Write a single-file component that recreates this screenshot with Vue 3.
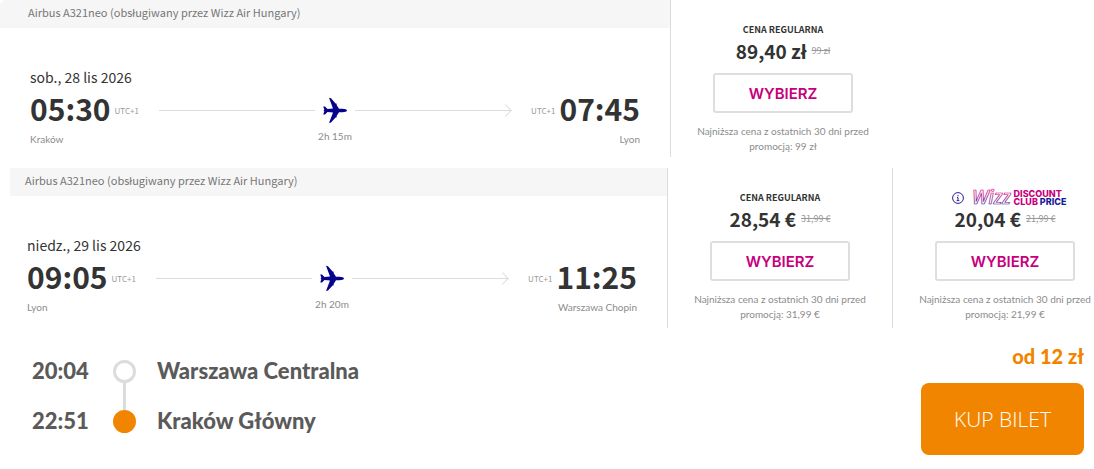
<script setup>
const flights = [
  {
    id: 'outbound',
    aircraft: 'Airbus A321neo (obsługiwany przez Wizz Air Hungary)',
    date: 'sob., 28 lis 2026',
    from: { time: '05:30', zone: 'UTC+1', city: 'Kraków' },
    to: { time: '07:45', zone: 'UTC+1', city: 'Lyon' },
    duration: '2h 15m',
    fares: [{ club: false, price: '89,40 zł', old: '99 zł' }]
  },
  {
    id: 'inbound',
    aircraft: 'Airbus A321neo (obsługiwany przez Wizz Air Hungary)',
    date: 'niedz., 29 lis 2026',
    from: { time: '09:05', zone: 'UTC+1', city: 'Lyon' },
    to: { time: '11:25', zone: 'UTC+1', city: 'Warszawa Chopin' },
    duration: '2h 20m',
    fares: [
      { club: false, price: '28,54 €', old: '31,99 €' },
      { club: true, price: '20,04 €', old: '21,99 €' }
    ]
  }
]
const stops = [
  { time: '20:04', name: 'Warszawa Centralna' },
  { time: '22:51', name: 'Kraków Główny' }
]
</script>

<template>
  <main class="page">
    <section v-for="f in flights" :key="f.id" class="flight" :class="f.id">
      <div class="leg">
        <header class="aircraft">{{ f.aircraft }}</header>
        <div class="details">
          <div class="date">{{ f.date }}</div>
          <div class="route">
            <time class="time">{{ f.from.time }}</time>
            <span class="zone">{{ f.from.zone }}</span>
            <div class="track">
              <span class="line"></span>
              <svg class="plane" viewBox="0 0 24 26" aria-hidden="true">
                <path d="M24 13.500c0-1-2.200-1.700-4.500-1.700H16L13.600 8l.2-1.200-1.200-.2L8 1.200 6 .8l4 10.800-5.500.5L2 9.500H.3l1 3.400-1 .6 1 .6-1 3.400H2l2.500-2.600 5.500.5L6 26l2-.4 4.600-5.200 1.200-.2-.2-1.200 2.400-3.800h3.500c2.300 0 4.500-.7 4.500-1.700z" />
              </svg>
              <span class="line arrow"></span>
            </div>
            <span class="zone">{{ f.to.zone }}</span>
            <time class="time">{{ f.to.time }}</time>
          </div>
          <div class="cities">
            <span>{{ f.from.city }}</span>
            <span class="duration">{{ f.duration }}</span>
            <span class="arrival">{{ f.to.city }}</span>
          </div>
        </div>
      </div>
      <div v-for="fare in f.fares" :key="fare.price" class="fare">
        <div v-if="fare.club" class="club">
          <svg class="info" viewBox="0 0 12 12" role="img" aria-label="Informacja">
            <circle cx="6" cy="6" r="5.400" />
            <path d="M6 3v1.300M5 5.500h1v3M4.700 8.600h2.600" />
          </svg>
          <svg class="wizz" viewBox="0 0 40 20">
            <defs>
              <linearGradient id="wizz-fade" x1="0" y1="0" x2="0" y2="1">
                <stop offset="0.300" stop-color="#d6007f" />
                <stop offset="0.800" stop-color="#4a1a9a" />
              </linearGradient>
            </defs>
            <text x="0" y="16">Wizz</text>
          </svg>
          <span class="club-name">DISCOUNT<br />CLUB <b>PRICE</b></span>
        </div>
        <div v-else class="label">CENA REGULARNA</div>
        <div class="price">
          <strong>{{ fare.price }}</strong>
          <s>{{ fare.old }}</s>
        </div>
        <button type="button" class="choose">WYBIERZ</button>
        <p class="note">Najniższa cena z ostatnich 30 dni przed promocją: {{ fare.old }}</p>
      </div>
    </section>

    <section class="train">
      <ol class="stops">
        <li v-for="s in stops" :key="s.time">
          <time>{{ s.time }}</time>
          <span class="dot"></span>
          <span>{{ s.name }}</span>
        </li>
      </ol>
      <div class="ticket">
        <div class="from-price">od 12 zł</div>
        <button type="button" class="buy">KUP BILET</button>
      </div>
    </section>
  </main>
</template>

<style>
body {
  margin: 0;
  background: #fff;
}
</style>

<style scoped>
.page {
  overflow: hidden;
  font-family: "Noto Sans CJK SC", "Noto Sans", sans-serif;
  color: #333;
}
.flight {
  display: grid;
  grid-template-columns: minmax(0, 1fr) 225px 225px;
}
.outbound {
  margin-right: -26px;
}
.inbound {
  margin: 11px -23px 0 10px;
}
.inbound .details {
  padding-left: 17px;
}
.inbound .aircraft {
  padding-left: 15px;
}
.aircraft {
  background: #f6f6f6;
  color: #777;
  font-size: 11px;
  line-height: 24px;
  padding: 0 0 4px 28px;
}
.outbound .aircraft {
  border-top-left-radius: 6px;
}
.details {
  padding: 37px 30px 0;
}
.date {
  font-size: 14px;
  line-height: 24px;
  padding-bottom: 1px;
}
.route {
  display: flex;
  align-items: center;
  height: 40px;
}
.time {
  font-size: 30px;
  font-weight: 700;
  line-height: 36px;
  padding-bottom: 4px;
}
.zone {
  font-size: 8px;
  color: #999;
  margin: 0 4px;
}
.track {
  flex: 1;
  display: flex;
  align-items: center;
  gap: 8px;
  margin: 0 16px;
}
.line {
  flex: 1;
  height: 1px;
  background: #dcdcdc;
  position: relative;
}
.arrow::after {
  content: "";
  position: absolute;
  right: 1px;
  top: -4px;
  width: 8px;
  height: 8px;
  border: solid #dcdcdc;
  border-width: 1px 1px 0 0;
  transform: rotate(45deg);
}
.plane {
  width: 24px;
  height: 26px;
  fill: #06038d;
}
.cities {
  display: grid;
  grid-template-columns: 1fr auto 1fr;
  font-family: Lato, sans-serif;
  font-size: 10px;
  line-height: 18px;
  color: #8c8c8c;
}
.duration {
  margin-top: -3px;
}
.arrival {
  text-align: right;
}
.fare {
  border-left: 1px solid #dcdcdc;
  display: flex;
  flex-direction: column;
  align-items: center;
  padding-top: 20px;
  min-height: 137px;
}
.inbound .fare {
  min-height: 140px;
}
.label {
  font-size: 9px;
  font-weight: 700;
  line-height: 20px;
}
.price {
  display: flex;
  align-items: center;
  gap: 5px;
  line-height: 22px;
  padding-bottom: 2px;
}
.price strong {
  font-size: 19px;
}
.price s {
  font-size: 9px;
  color: #999;
}
.choose {
  width: 140px;
  height: 40px;
  margin-top: 9px;
  border: 2px solid #dedede;
  border-radius: 3px;
  background: #fff;
  color: #c6007e;
  font: 600 15px Inter, sans-serif;
}
.note {
  margin: 11px 0 0;
  width: 190px;
  font-family: Lato, sans-serif;
  font-size: 10px;
  line-height: 15px;
  color: #8c8c8c;
  text-align: center;
}
.club {
  display: flex;
  align-items: center;
  height: 20px;
  padding-left: 8px;
}
.info {
  width: 12px;
  height: 12px;
  margin-right: 8px;
  fill: none;
  stroke: #2a1a9a;
}
.wizz {
  width: 40px;
  height: 20px;
  overflow: visible;
}
.wizz text {
  font: italic 600 19px "Open Sans", sans-serif;
  fill: none;
  stroke: url(#wizz-fade);
  stroke-width: 0.700;
}
.club-name {
  margin-left: 2px;
  font: 800 9px/8px Inter, sans-serif;
  color: #c6007e;
}
.club-name b {
  font-weight: 800;
  color: #1b1b9a;
}
.train {
  display: flex;
  justify-content: space-between;
  padding: 16px 10px 14px 32px;
}
.stops {
  list-style: none;
  margin: 2px 0 0;
  padding: 0;
  color: #5a5a5a;
  font: 900 22px/50px Lato, sans-serif;
}
.stops li {
  display: grid;
  grid-template-columns: 81px 23px auto;
  align-items: center;
}
.stops li > :last-child {
  margin-left: 21px;
}
.dot {
  width: 23px;
  height: 23px;
  box-sizing: border-box;
  border: 3px solid #dcdcdc;
  border-radius: 50%;
  position: relative;
}
.stops li:first-child .dot::after {
  content: "";
  position: absolute;
  left: 7px;
  top: 20px;
  width: 3px;
  height: 27px;
  background: #dcdcdc;
}
.stops li:last-child .dot {
  background: #f28500;
  border-color: #f28500;
}
.ticket {
  display: flex;
  flex-direction: column;
  align-items: flex-end;
}
.from-price {
  color: #f28500;
  font: 900 20px/24px Lato, sans-serif;
}
.buy {
  width: 163px;
  height: 72px;
  margin-top: 15px;
  border: 0;
  border-radius: 8px;
  background: #f28500;
  color: #fff;
  font: 300 21px "Open Sans", sans-serif;
}
</style>
